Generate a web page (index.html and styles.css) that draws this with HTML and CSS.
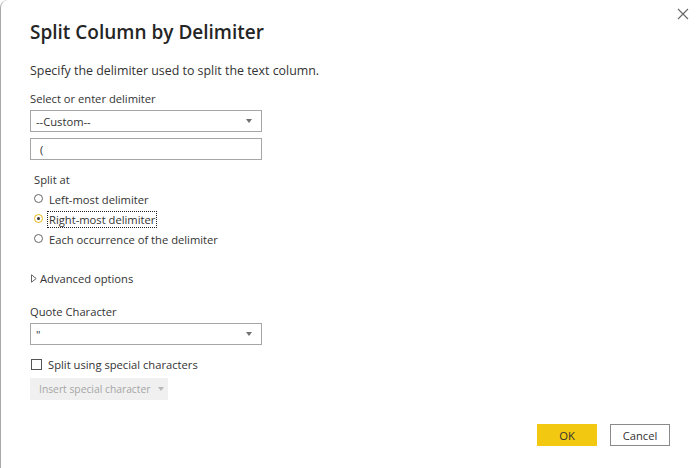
FILE: index.html
```html
<!DOCTYPE html>
<html>
<head>
<meta charset="utf-8">
<link rel="stylesheet" href="styles.css">
</head>
<body>
<div class="dialog">
  <button class="close" aria-label="Close">
    <svg width="12" height="12" viewBox="0 0 12 12"><path d="M1 1L11 11M11 1L1 11" stroke="#666" stroke-width="1.1" fill="none"/></svg>
  </button>
  <h1 class="title">Split Column by Delimiter</h1>
  <p class="desc">Specify the delimiter used to split the text column.</p>

  <div class="field">
    <label class="label">Select or enter delimiter</label>
    <div class="select"><span>--Custom--</span><span class="caret"></span></div>
    <div class="input"><span>(</span></div>
  </div>

  <div class="group">
    <div class="label">Split at</div>
    <div class="radio"><span class="dot"></span><span>Left-most delimiter</span></div>
    <div class="radio checked"><span class="dot"></span><span class="focus">Right-most delimiter</span></div>
    <div class="radio"><span class="dot"></span><span>Each occurrence of the delimiter</span></div>
  </div>

  <div class="advanced">
    <svg class="tri" width="6" height="9" viewBox="0 0 6 9"><path d="M0.5 0.8L5.2 4.5L0.5 8.2Z" fill="none" stroke="#666" stroke-width="1"/></svg>
    <span>Advanced options</span>
  </div>

  <div class="field quote">
    <label class="label">Quote Character</label>
    <div class="select"><span>"</span><span class="caret"></span></div>
  </div>

  <div class="check"><span class="box"></span><span>Split using special characters</span></div>
  <div class="insert"><span>Insert special character</span><span class="caret light"></span></div>

  <div class="footer">
    <button class="btn ok">OK</button>
    <button class="btn cancel">Cancel</button>
  </div>
</div>
</body>
</html>
```
FILE: styles.css
```css
html, body {
  margin: 0;
  padding: 0;
  width: 700px;
  height: 468px;
  background: #ffffff;
  overflow: hidden;
}
body {
  font-family: "Open Sans", "Noto Sans", sans-serif;
  color: #252525;
}
.dialog {
  position: relative;
  box-sizing: border-box;
  width: 700px;
  height: 468px;
  padding: 18px 0 0 29px;
  border-left: 1px solid #a8a8a8;
  border-top-left-radius: 8px;
}
.close {
  position: absolute;
  right: 10px;
  top: 7px;
  width: 14px;
  height: 14px;
  padding: 0;
  border: none;
  background: none;
  display: flex;
  align-items: center;
  justify-content: center;
}
.title {
  margin: 0;
  font-size: 19px;
  font-weight: 600;
  line-height: 28px;
  color: #252525;
}
.desc {
  margin: 16px 0 0 0;
  font-size: 12.4px;
  line-height: 18px;
  color: #333;
}
.field {
  margin-top: 11px;
  width: 232px;
}
.label {
  display: block;
  font-size: 11.2px;
  line-height: 15px;
  color: #333;
}
.select, .input {
  box-sizing: border-box;
  height: 22px;
  border: 1px solid #a6a6a6;
  display: flex;
  align-items: center;
  justify-content: space-between;
  padding: 0 9px 0 5px;
  font-size: 11.2px;
  color: #333;
  margin-top: 4px;
}
.input {
  margin-top: 6px;
  padding-left: 9px;
}
.caret {
  width: 0;
  height: 0;
  border-left: 3.5px solid transparent;
  border-right: 3.5px solid transparent;
  border-top: 4px solid #707070;
}
.caret.light {
  border-top-color: #b8b8b8;
  margin-left: 8px;
}
.group {
  margin-top: 12px;
  padding-left: 4px;
}
.group .label {
  margin-bottom: 2px;
}
.radio {
  display: flex;
  align-items: center;
  height: 20px;
  font-size: 11.2px;
  color: #333;
}
.dot {
  box-sizing: border-box;
  width: 9px;
  height: 9px;
  border: 1px solid #666;
  border-radius: 50%;
  margin-right: 6px;
  margin-top: -2px;
  display: flex;
  align-items: center;
  justify-content: center;
}
.radio.checked .dot {
  border-color: #e8b612;
}
.radio.checked .dot::after {
  content: "";
  width: 3px;
  height: 3px;
  border-radius: 50%;
  background: #333;
}
.focus {
  outline: 1px dotted #222;
  outline-offset: 0;
  padding: 0 1px;
  margin-left: -1px;
}
.advanced {
  margin-top: 22px;
  display: flex;
  align-items: center;
  font-size: 11.2px;
  color: #333;
}
.tri {
  margin: 0 3px 0 1px;
}
.quote {
  margin-top: 18px;
}
.check {
  margin-top: 12px;
  display: flex;
  align-items: center;
  font-size: 11.2px;
  color: #333;
}
.box {
  box-sizing: border-box;
  width: 11px;
  height: 11px;
  border: 1px solid #555;
  margin: 0 6px 0 1px;
}
.insert {
  margin-top: 6px;
  box-sizing: border-box;
  width: 138px;
  height: 22px;
  background: #f0f0f0;
  display: flex;
  align-items: center;
  padding-left: 9px;
  font-size: 10.3px;
  color: #a6a6a6;
  white-space: nowrap;
}
.footer {
  position: absolute;
  right: 30px;
  bottom: 22px;
  display: flex;
  gap: 13px;
}
.btn {
  box-sizing: border-box;
  width: 60px;
  height: 22px;
  font-family: "Open Sans", "Noto Sans", sans-serif;
  font-size: 11.2px;
  color: #333;
  padding: 0;
}
.ok {
  background: #f2c811;
  border: none;
}
.cancel {
  background: #fff;
  border: 1px solid #8a8a8a;
}
```
